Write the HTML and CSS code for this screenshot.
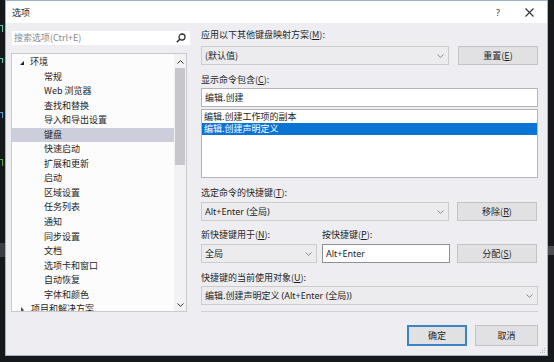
FILE: index.html
```html
<!DOCTYPE html>
<html lang="zh-CN">
<head>
<meta charset="utf-8">
<title>选项</title>
<link rel="stylesheet" href="styles.css">
</head>
<body>
<div class="backdrop-left">
  <span class="mark m1"></span>
  <span class="mark m2"></span>
  <span class="mark m3"></span>
  <span class="mark m4"></span>
  <span class="code-block"></span>
</div>
<div class="dialog">
  <div class="titlebar">
    <span class="title">选项</span>
    <span class="help">?</span>
    <span class="close"><svg width="9" height="9" viewBox="0 0 9 9"><path d="M0.5 0.5 L8.5 8.5 M8.5 0.5 L0.5 8.5" stroke="#333" stroke-width="1.1" fill="none"/></svg></span>
  </div>
  <div class="content">
    <div class="left">
      <div class="search">
        <span class="search-text">搜索选项(Ctrl+E)</span>
        <svg class="search-icon" width="10" height="10" viewBox="0 0 10 10"><circle cx="6" cy="4" r="3" stroke="#333" stroke-width="1.3" fill="none"/><path d="M3.8 6.2 L0.8 9.2" stroke="#333" stroke-width="1.6"/></svg>
      </div>
      <div class="tree">
        <div class="tree-items">
          <div class="row root"><span class="tri-open"></span>环境</div>
          <div class="row">常规</div>
          <div class="row">Web 浏览器</div>
          <div class="row">查找和替换</div>
          <div class="row">导入和导出设置</div>
          <div class="row selected">键盘</div>
          <div class="row">快速启动</div>
          <div class="row">扩展和更新</div>
          <div class="row">启动</div>
          <div class="row">区域设置</div>
          <div class="row">任务列表</div>
          <div class="row">通知</div>
          <div class="row">同步设置</div>
          <div class="row">文档</div>
          <div class="row">选项卡和窗口</div>
          <div class="row">自动恢复</div>
          <div class="row">字体和颜色</div>
          <div class="row root"><span class="tri-closed"></span>项目和解决方案</div>
        </div>
        <div class="scrollbar">
          <svg class="arrow" width="7" height="4" viewBox="0 0 7 4"><path d="M0.5 3.5 L3.5 0.6 L6.5 3.5" stroke="#333" stroke-width="1" fill="none"/></svg>
          <div class="track"><div class="thumb"></div></div>
          <svg class="arrow" width="7" height="4" viewBox="0 0 7 4"><path d="M0.5 0.5 L3.5 3.4 L6.5 0.5" stroke="#333" stroke-width="1" fill="none"/></svg>
        </div>
      </div>
    </div>
    <div class="right">
      <div class="label l1">应用以下其他键盘映射方案(<u>M</u>):</div>
      <div class="line r1">
        <div class="combo w-wide"><span>(默认值)</span><svg class="chev" width="7" height="4" viewBox="0 0 7 4"><path d="M0.5 0.5 L3.5 3.4 L6.5 0.5" stroke="#888" stroke-width="1" fill="none"/></svg></div>
        <div class="button">重置(<u>E</u>)</div>
      </div>
      <div class="label l2">显示命令包含(<u>C</u>):</div>
      <div class="input full">编辑.创建</div>
      <div class="listbox">
        <div class="item">编辑.创建工作项的副本</div>
        <div class="item active">编辑.创建声明定义</div>
      </div>
      <div class="label l3">选定命令的快捷键(<u>T</u>):</div>
      <div class="line r2">
        <div class="combo w-wide"><span class="latin">Alt+Enter (全局)</span><svg class="chev" width="7" height="4" viewBox="0 0 7 4"><path d="M0.5 0.5 L3.5 3.4 L6.5 0.5" stroke="#888" stroke-width="1" fill="none"/></svg></div>
        <div class="button">移除(<u>R</u>)</div>
      </div>
      <div class="label-row">
        <div class="label scope-label">新快捷键用于(<u>N</u>):</div>
        <div class="label">按快捷键(<u>P</u>):</div>
      </div>
      <div class="line r3">
        <div class="combo w-scope"><span>全局</span><svg class="chev" width="7" height="4" viewBox="0 0 7 4"><path d="M0.5 0.5 L3.5 3.4 L6.5 0.5" stroke="#888" stroke-width="1" fill="none"/></svg></div>
        <div class="input keys latin">Alt+Enter</div>
        <div class="button">分配(<u>S</u>)</div>
      </div>
      <div class="label l4">快捷键的当前使用对象(<u>U</u>):</div>
      <div class="combo full r4"><span>编辑.创建声明定义 <span class="latin">(Alt+Enter (全局))</span></span><svg class="chev" width="7" height="4" viewBox="0 0 7 4"><path d="M0.5 0.5 L3.5 3.4 L6.5 0.5" stroke="#888" stroke-width="1" fill="none"/></svg></div>
      <div class="separator"></div>
      <div class="footer">
        <div class="button ok">确定</div>
        <div class="button cancel">取消</div>
      </div>
    </div>
  </div>
  <div class="grip">
    <svg width="7" height="7" viewBox="0 0 7 7"><g fill="#b8b8b8"><rect x="5" y="1" width="1" height="1"/><rect x="3" y="3" width="1" height="1"/><rect x="5" y="3" width="1" height="1"/><rect x="1" y="5" width="1" height="1"/><rect x="3" y="5" width="1" height="1"/><rect x="5" y="5" width="1" height="1"/></g></svg>
  </div>
</div>
<div class="backdrop-right">
  <span class="code-block right-block"></span>
</div>
</body>
</html>
```

FILE: styles.css
```css
* { box-sizing: border-box; margin: 0; padding: 0; }

html, body { width: 554px; height: 362px; overflow: hidden; }

body {
  background: #16191b;
  display: flex;
  align-items: flex-start;
  font-family: "Noto Sans CJK SC", "Noto Sans", sans-serif;
  font-size: 9px;
  color: #1e1e1e;
}

u { text-decoration: underline; text-underline-offset: 1px; }

.latin { font-family: "Noto Sans", "Noto Sans CJK SC", sans-serif; }

/* backdrop (editor behind the dialog) */
.backdrop-left {
  width: 5px;
  height: 362px;
  position: relative;
  overflow: hidden;
}
.backdrop-right {
  width: 6px;
  height: 362px;
  position: relative;
  overflow: hidden;
}
.mark {
  position: absolute;
  left: 0;
  width: 3px;
  height: 7px;
  border-right: 1px solid currentColor;
  border-top: 1px solid currentColor;
}
.m1 { top: 25px; color: #4ec9b0; }
.m2 { top: 58px; color: #4ec9b0; height: 5px; }
.m3 { top: 112px; color: #569cd6; height: 6px; }
.m4 { top: 159px; color: #57a64a; }
.code-block {
  position: absolute;
  left: 0;
  top: 243px;
  width: 5px;
  height: 14px;
  background: #3a3d41;
}
.right-block { top: 246px; height: 9px; width: 6px; background: #4a4d52; }

/* dialog */
.dialog {
  position: relative;
  width: 543px;
  height: 356px;
  background: #eeeef2;
  border: 1px solid #9db3cc;
  display: flex;
  flex-direction: column;
}

.titlebar {
  height: 22px;
  background: #ffffff;
  display: flex;
  align-items: center;
  padding-left: 6px;
  flex-shrink: 0;
}
.title { font-size: 9px; line-height: 12px; color: #1e1e1e; margin-top: 1px; }
.help {
  margin-left: auto;
  font-family: "Noto Sans", sans-serif;
  font-size: 9px;
  color: #333;
  width: 10px;
  text-align: center;
  margin-top: 1px;
}
.close {
  width: 9px;
  height: 9px;
  margin-left: 22px;
  margin-right: 13px;
  display: flex;
}

.content {
  display: flex;
  padding: 4px 9px 0 5px;
  gap: 11px;
}

/* left column */
.left {
  width: 179px;
  display: flex;
  flex-direction: column;
}
.search {
  margin-top: 4px;
  margin-left: 1px;
  height: 14px;
  background: #ffffff;
  display: flex;
  align-items: center;
  padding-left: 2px;
  padding-right: 4px;
}
.search-text { color: #8a8a8a; line-height: 12px; }
.search-icon { margin-left: auto; }

.tree {
  margin-top: 8px;
  width: 176px;
  height: 259px;
  background: #fcfcfc;
  border: 1px solid #c9c9cf;
  display: flex;
  overflow: hidden;
}
.tree-items {
  flex: 1;
  padding-top: 1px;
  overflow: hidden;
}
.row {
  height: 14.55px;
  line-height: 14.55px;
  padding-left: 32px;
  white-space: nowrap;
  color: #1e1e1e;
}
.row.root {
  padding-left: 8px;
  display: flex;
  align-items: center;
}
.row.selected { background: #cdcedb; }
.tri-open {
  width: 0;
  height: 0;
  border-left: 4px solid transparent;
  border-bottom: 4px solid #1e1e1e;
  margin-right: 6px;
  margin-top: 1px;
}
.tri-closed {
  width: 0;
  height: 0;
  border-top: 3px solid transparent;
  border-bottom: 3px solid transparent;
  border-left: 3px solid #555;
  margin-right: 7px;
  margin-left: 1px;
}

.scrollbar {
  width: 12px;
  display: flex;
  flex-direction: column;
  align-items: center;
  background: #f2f2f4;
}
.scrollbar .arrow { margin: 6px 0 4px; flex-shrink: 0; }
.scrollbar .arrow:last-child { margin: 4px 0 4px; }
.track {
  flex: 1;
  width: 12px;
  display: flex;
  justify-content: center;
}
.thumb {
  width: 10px;
  height: 97px;
  background: #c6c6cc;
}

/* right column */
.right {
  width: 337px;
  display: flex;
  flex-direction: column;
}
.label {
  height: 12px;
  line-height: 12px;
  color: #1e1e1e;
  white-space: nowrap;
}
.l1 { margin-top: 2px; }
.l2 { margin-top: 9px; }
.l3 { margin-top: 9px; }
.l4 { margin-top: 9px; }

.line {
  display: flex;
  align-items: center;
}
.r1 { margin-top: 5px; gap: 9px; }
.r2 { margin-top: 3px; gap: 8px; }
.r3 { margin-top: 3px; }

.combo {
  height: 19px;
  background: #ececee;
  border: 1px solid #cccccc;
  display: flex;
  align-items: center;
  padding-left: 3px;
  padding-right: 4px;
  white-space: nowrap;
}
.combo .chev { margin-left: auto; flex-shrink: 0; }
.w-wide { width: 248px; }
.w-scope { width: 116px; }
.full { width: 337px; }
.r4 { margin-top: 2px; }

.button {
  width: 80px;
  height: 19px;
  background: #e1e1e3;
  border: 1px solid #c3c3c6;
  display: flex;
  align-items: center;
  justify-content: center;
  white-space: nowrap;
  color: #1e1e1e;
}

.input {
  height: 19px;
  background: #ffffff;
  border: 1px solid #b4b4b8;
  display: flex;
  align-items: center;
  padding-left: 3px;
  white-space: nowrap;
}
.input.full { margin-top: 2px; }
.input.keys {
  width: 128px;
  margin-left: 5px;
  margin-right: 7px;
  border-color: #8f8f94;
}

.listbox {
  margin-top: 2px;
  height: 69px;
  background: #ffffff;
  border: 1px solid #b4b4b8;
  padding-top: 1px;
}
.item {
  height: 12px;
  line-height: 12px;
  padding-left: 2px;
  white-space: nowrap;
}
.item.active { background: #0a74d4; color: #ffffff; }

.label-row {
  display: flex;
  margin-top: 8px;
}
.scope-label { width: 121px; }

.separator {
  margin-top: 6px;
  height: 1px;
  background: #d2d2d6;
}

.footer {
  display: flex;
  justify-content: flex-end;
  gap: 8px;
  margin-top: 13px;
}
.footer .button { height: 21px; }
.ok { width: 60px; border: 2px solid #3d84c6; }
.cancel { width: 63px; }

.grip {
  position: absolute;
  right: 1px;
  bottom: 1px;
  width: 7px;
  height: 7px;
  display: flex;
}
```
